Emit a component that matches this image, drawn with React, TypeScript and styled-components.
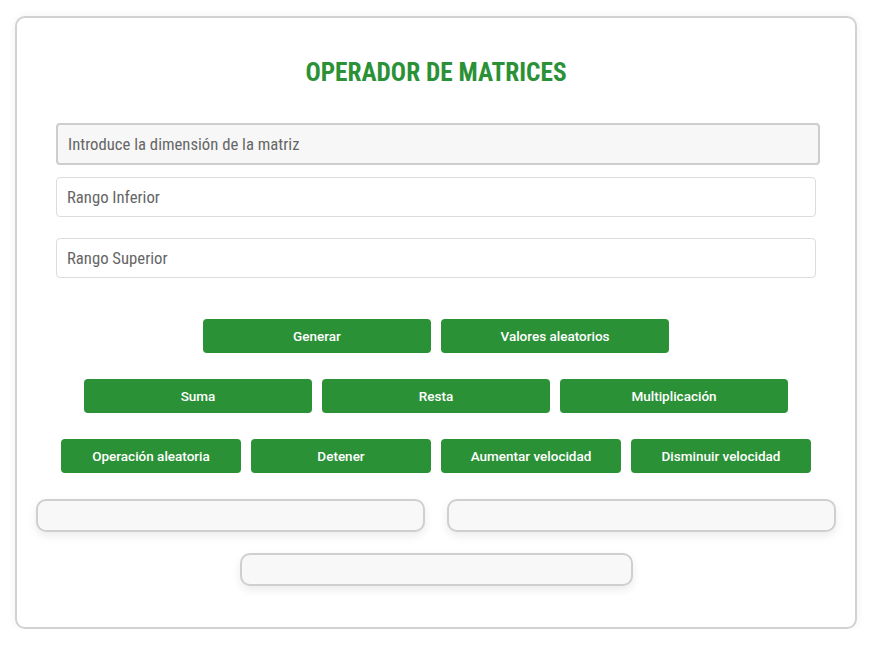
import React from "react";
import styled, { createGlobalStyle } from "styled-components";

const GlobalStyle = createGlobalStyle`
  html, body {
    margin: 0;
    padding: 0;
    background: #fff;
  }
  body {
    padding: 15px 15px 0 15px;
    font-family: "Roboto Condensed", "Roboto", "Liberation Sans", sans-serif;
  }
`;

const Card = styled.div`
  box-sizing: border-box;
  width: 842px;
  height: 613px;
  margin-top: 1px;
  border: 2px solid #d2d2d2;
  border-radius: 10px;
  background: #fff;
  box-shadow: 0 0 8px rgba(0, 0, 0, 0.06);
  padding: 0 39px;
  display: flex;
  flex-direction: column;
  align-items: center;
`;

const Title = styled.h1`
  margin: 41px 0 36px;
  font-size: 25.3px;
  line-height: 28px;
  font-weight: 700;
  color: #2b9136;
`;

const Fields = styled.div`
  align-self: stretch;
  display: flex;
  flex-direction: column;
`;

const Input = styled.input<{ $main?: boolean }>`
  box-sizing: border-box;
  width: ${(p) => (p.$main ? "764px" : "760px")};
  height: ${(p) => (p.$main ? "42px" : "40px")};
  margin-bottom: ${(p) => (p.$main ? "12px" : "21px")};
  padding: 0 10px;
  border: ${(p) => (p.$main ? "2px solid #cdcdcd" : "1px solid #dcdcdc")};
  border-radius: 4px;
  background: ${(p) => (p.$main ? "#f7f7f7" : "#fff")};
  font-family: "Roboto Condensed", "Roboto", "Liberation Sans", sans-serif;
  font-size: 16.7px;
  color: #555;
  outline: none;

  &::placeholder {
    color: #666;
  }
`;

const ButtonRow = styled.div<{ $mt: number }>`
  display: flex;
  gap: 10px;
  justify-content: center;
  margin-top: ${(p) => p.$mt}px;
`;

const Button = styled.button<{ $w: number }>`
  box-sizing: border-box;
  width: ${(p) => p.$w}px;
  height: 34px;
  border: none;
  border-radius: 4px;
  background: #2b9136;
  color: #fff;
  font-family: "Roboto", "Liberation Sans", sans-serif;
  font-weight: 500;
  font-size: 13.5px;
  cursor: pointer;
`;

const ResultRow = styled.div<{ $mt: number }>`
  display: flex;
  gap: 22px;
  justify-content: center;
  margin-top: ${(p) => p.$mt}px;
`;

const ResultBox = styled.div<{ $w: number }>`
  box-sizing: border-box;
  width: ${(p) => p.$w}px;
  height: 33px;
  border: 2px solid #cfcfcf;
  border-radius: 10px;
  background: #f8f8f8;
  box-shadow: 0 4px 10px rgba(0, 0, 0, 0.08);
`;

export default function App() {
  return (
    <>
      <GlobalStyle />
      <Card>
        <Title>OPERADOR DE MATRICES</Title>
        <Fields>
          <Input $main placeholder="Introduce la dimensión de la matriz" />
          <Input placeholder="Rango Inferior" />
          <Input placeholder="Rango Superior" />
        </Fields>
        <ButtonRow $mt={20}>
          <Button $w={228}>Generar</Button>
          <Button $w={228}>Valores aleatorios</Button>
        </ButtonRow>
        <ButtonRow $mt={26}>
          <Button $w={228}>Suma</Button>
          <Button $w={228}>Resta</Button>
          <Button $w={228}>Multiplicación</Button>
        </ButtonRow>
        <ButtonRow $mt={26}>
          <Button $w={180}>Operación aleatoria</Button>
          <Button $w={180}>Detener</Button>
          <Button $w={180}>Aumentar velocidad</Button>
          <Button $w={180}>Disminuir velocidad</Button>
        </ButtonRow>
        <ResultRow $mt={26}>
          <ResultBox $w={389} />
          <ResultBox $w={389} />
        </ResultRow>
        <ResultRow $mt={21}>
          <ResultBox $w={393} />
        </ResultRow>
      </Card>
    </>
  );
}
